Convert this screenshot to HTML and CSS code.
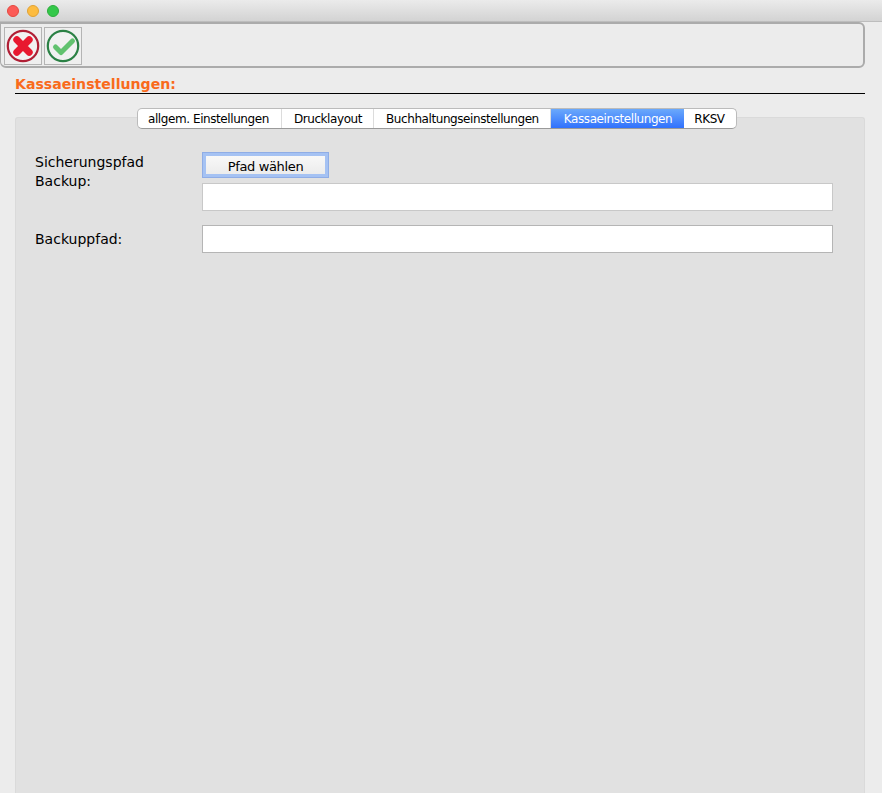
FILE: index.html
```html
<!DOCTYPE html>
<html lang="de">
<head>
<meta charset="utf-8">
<title>Kassaeinstellungen</title>
<link rel="stylesheet" href="styles.css">
</head>
<body>
<div class="titlebar">
  <span class="light light-red"></span>
  <span class="light light-yellow"></span>
  <span class="light light-green"></span>
</div>
<div class="toolbar">
  <button class="tool" type="button" aria-label="Abbrechen">
    <svg width="34" height="34" viewBox="0 0 34 34">
      <circle cx="17" cy="17" r="15.2" fill="#f1f1f1" stroke="#b01f35" stroke-width="2.2"/>
      <path d="M10.8 10.8 L23.2 23.2 M23.2 10.8 L10.8 23.2" stroke="#e8182f" stroke-width="7" stroke-linecap="round" fill="none"/>
    </svg>
  </button>
  <button class="tool" type="button" aria-label="Bestätigen">
    <svg width="34" height="34" viewBox="0 0 34 34">
      <circle cx="17" cy="17" r="15.2" fill="#f1f1f1" stroke="#2b8145" stroke-width="2.2"/>
      <path d="M9.5 18 L15 23.5 L26.5 12" stroke="#62c26f" stroke-width="5" stroke-linecap="round" stroke-linejoin="round" fill="none"/>
    </svg>
  </button>
</div>
<h1 class="heading">Kassaeinstellungen:</h1>
<main class="tabview">
  <nav class="tabs">
    <span class="tab">allgem. Einstellungen</span>
    <span class="tab">Drucklayout</span>
    <span class="tab">Buchhaltungseinstellungen</span>
    <span class="tab tab-active">Kassaeinstellungen</span>
    <span class="tab">RKSV</span>
  </nav>
  <section class="panel">
    <div class="form">
      <label class="label">Sicherungspfad Backup:</label>
      <div class="stack">
        <button class="pick" type="button"><span>Pfad wählen</span></button>
        <div class="field"></div>
      </div>
      <label class="label label-single">Backuppfad:</label>
      <div class="field field-dark"></div>
    </div>
  </section>
</main>
</body>
</html>
```
FILE: styles.css
```css
* { box-sizing: border-box; }
html, body { height: 100%; }
body {
  margin: 0;
  height: 793px;
  overflow: hidden;
  background: #ececec;
  color: #000;
  font-family: "DejaVu Sans", sans-serif;
  font-size: 12px;
  letter-spacing: -0.42px;
  display: flex;
  flex-direction: column;
}
.titlebar {
  height: 22px;
  flex: none;
  display: flex;
  align-items: center;
  gap: 8px;
  padding: 0 0 0 7px;
  background: linear-gradient(#ebebeb, #d3d3d3);
  border-bottom: 1px solid #bdbdbd;
}
.light { width: 12px; height: 12px; border-radius: 50%; }
.light-red { background: #fc5b57; border: 1px solid #e5483f; }
.light-yellow { background: #fdbc40; border: 1px solid #e1a234; }
.light-green { background: #34c84a; border: 1px solid #2dac3c; }
.toolbar {
  width: 865px;
  height: 46px;
  flex: none;
  display: flex;
  gap: 2px;
  padding: 3px;
  border: 2px solid #ababab;
  border-left-width: 1px;
  border-radius: 0 6px 6px 6px;
  background: #ececec;
}
.tool {
  width: 38px;
  height: 38px;
  padding: 0;
  margin: 0;
  display: flex;
  align-items: center;
  justify-content: center;
  border: 1px solid #b4b4b4;
  background: #efefef;
}
.heading {
  flex: none;
  margin: 6px 17px 0 15px;
  height: 20px;
  border-bottom: 1px solid #000;
  color: #f96a1b;
  font-size: 14.1px;
  letter-spacing: 0;
  font-weight: bold;
  line-height: 20px;
}
.tabview {
  flex: 1;
  margin: 14px 17px 0 15px;
  display: flex;
  flex-direction: column;
  min-height: 0;
}
.tabs {
  align-self: flex-start;
  position: relative;
  z-index: 1;
  margin-left: 122px;
  height: 21px;
  display: flex;
  background: #fff;
  border: 1px solid #bbb;
  border-bottom-color: #9a9a9a;
  border-radius: 5px;
  overflow: hidden;
}
.tab {
  display: flex;
  align-items: center;
  justify-content: center;
  padding: 1px 11px 0 12px;
  border-right: 1px solid #dcdcdc;
  white-space: nowrap;
  line-height: 19px;
}
.tab:first-child { padding-left: 10px; padding-right: 12px; }
.tab:last-child { padding-left: 10px; border-right: 0; }
.tab-active {
  color: #fff;
  background: linear-gradient(#6ba9fb, #3071fd);
  border-right: 0;
  padding-left: 13px;
  padding-right: 12px;
}
.panel {
  flex: 1;
  margin-top: -12px;
  padding: 34px 31px 0 19px;
  background: #e1e1e1;
  border: 1px solid #dadada;
  border-bottom: 0;
  border-radius: 3px 3px 0 0;
}
.form {
  display: grid;
  grid-template-columns: 167px 631px;
  row-gap: 14px;
  font-size: 14px;
  letter-spacing: 0;
}
.label { line-height: 19px; padding-top: 1px; width: 125px; }
.label-single { padding-top: 5px; width: auto; }
.stack { display: flex; flex-direction: column; gap: 5px; }
.pick {
  align-self: flex-start;
  width: 127px;
  height: 26px;
  padding: 3px;
  margin: 0;
  background: #a5c2f3;
  border: 1px solid #8fade6;
  font: inherit;
  font-size: 13px;
  letter-spacing: -0.35px;
  color: #000;
}
.pick span {
  display: block;
  height: 18px;
  line-height: 22px;
  background: linear-gradient(#f8f8f8, #ececec);
}
.field {
  height: 28px;
  background: #fff;
  border: 1px solid #c8c8c8;
}
.field-dark { border-color: #b5b5b5; }
```
